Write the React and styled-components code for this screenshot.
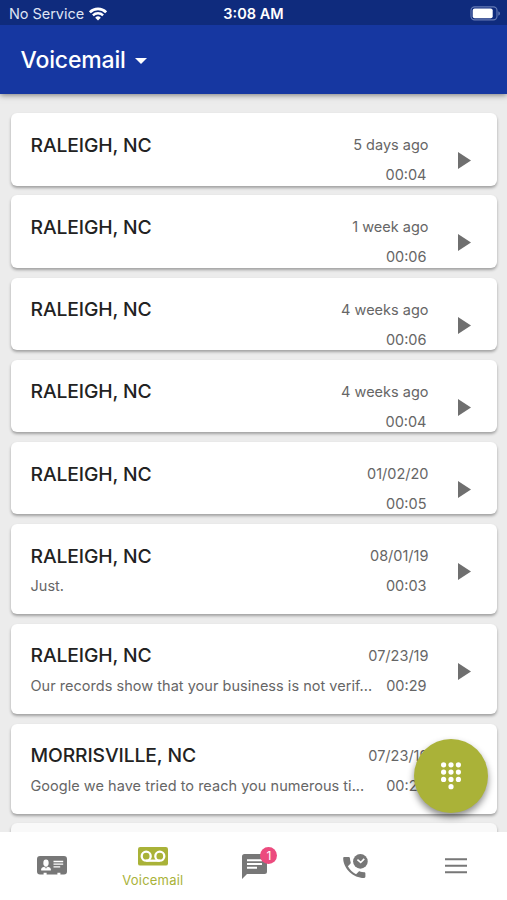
import React from 'react'
import styled, { createGlobalStyle } from 'styled-components'

const voicemails = [
  { from: 'RALEIGH, NC', date: '5 days ago', length: '00:04' },
  { from: 'RALEIGH, NC', date: '1 week ago', length: '00:06' },
  { from: 'RALEIGH, NC', date: '4 weeks ago', length: '00:06' },
  { from: 'RALEIGH, NC', date: '4 weeks ago', length: '00:04' },
  { from: 'RALEIGH, NC', date: '01/02/20', length: '00:05' },
  { from: 'RALEIGH, NC', date: '08/01/19', length: '00:03', preview: 'Just.' },
  { from: 'RALEIGH, NC', date: '07/23/19', length: '00:29', preview: 'Our records show that your business is not verif...' },
  { from: 'MORRISVILLE, NC', date: '07/23/19', length: '00:29', preview: 'Google we have tried to reach you numerous ti...' },
]

export default function App() {
  return (
    <Phone>
      <GlobalStyle />
      <StatusBar>
        <Carrier>
          No Service
          <WifiIcon />
        </Carrier>
        <Clock>3:08 AM</Clock>
        <BatteryIcon />
      </StatusBar>
      <Header>
        <Heading>Voicemail</Heading>
        <Caret viewBox="0 0 12 6"><path d="M0 0h12L6 6z" /></Caret>
      </Header>
      <List>
        {voicemails.map((vm, i) => (
          <Card key={i} $tall={!!vm.preview}>
            <Info>
              <Line>
                <From>{vm.from}</From>
                <Small>{vm.date}</Small>
              </Line>
              <Line>
                <Preview>{vm.preview}</Preview>
                <Duration>{vm.length}</Duration>
              </Line>
            </Info>
            <Play viewBox="0 0 13 17"><path d="M0 0l13 8.5L0 17z" /></Play>
          </Card>
        ))}
        <Card $tall $faded />
      </List>
      <DialButton>
        <DialpadIcon />
      </DialButton>
      <TabBar>
        <Tab><ContactIcon /></Tab>
        <Tab $active>
          <VoicemailIcon />
          <TabLabel>Voicemail</TabLabel>
        </Tab>
        <Tab>
          <MessageIcon />
          <Badge>1</Badge>
        </Tab>
        <Tab><RecentIcon /></Tab>
        <Tab><MenuIcon /></Tab>
      </TabBar>
    </Phone>
  )
}

const WifiIcon = () => (
  <svg width="18" height="14" viewBox="0 0 18 14">
    <path d="M0.9 5.3a11.4 11.4 0 0 1 16.2 0" fill="none" stroke="#fff" strokeWidth="2.6" />
    <path d="M3.9 8.4a7.2 7.2 0 0 1 10.200 0" fill="none" stroke="#fff" strokeWidth="2.4" />
    <path d="M6.2 10.7a4 4 0 0 1 5.6 0L9 13.5z" fill="#fff" />
  </svg>
)

const BatteryIcon = () => (
  <svg width="31" height="15" viewBox="0 0 31 15">
    <rect x="1" y="0.9" width="26" height="13" rx="3.6" fill="none" stroke="#667bb5" strokeWidth="1.1" />
    <rect x="2.7" y="2.6" width="20" height="9.6" rx="2" fill="#fff" />
    <path d="M28.3 5.2c2.2.9 2.2 3.6 0 4.500z" fill="#667bb5" />
  </svg>
)

const DialpadIcon = () => (
  <svg width="22" height="28" viewBox="0 0 22 28">
    {[3.6, 11, 18.4].map(x => [2.8, 10.1, 17.4].map(y => (
      <circle key={x + '-' + y} cx={x} cy={y} r="2.6" fill="#fff" />
    )))}
    <circle cx="11" cy="24.7" r="2.6" fill="#fff" />
  </svg>
)

const ContactIcon = () => (
  <svg width="30" height="20" viewBox="0 0 30 20">
    <path d="M3 0h24a3 3 0 0 1 3 3v12.5a3 3 0 0 1-3 3h-3.6v-1.8h-3v1.8H9.600v-1.800h-3v1.800H3a3 3 0 0 1-3-3V3a3 3 0 0 1 3-3z" fill="#777" />
    <ellipse cx="9" cy="7" rx="2.7" ry="3.4" fill="#fff" />
    <path d="M4.200 14.400v-1.200c0-1.800 2.600-2.600 4.800-2.600s4.800.8 4.800 2.600v1.200z" fill="#fff" />
    <path d="M7.800 10.900L9 12.200l1.200-1.300" fill="none" stroke="#777" strokeWidth="0.8" />
    <path d="M16.500 5.500h9.700M16.500 8.200h9.700M16.500 10.900h6.700" stroke="#fff" strokeWidth="1.3" />
  </svg>
)

const VoicemailIcon = () => (
  <svg width="30" height="19" viewBox="0 0 30 19">
    <rect width="30" height="18.600" rx="2.200" fill="#a9b238" />
    <g fill="none" stroke="#fff" strokeWidth="2.300">
      <circle cx="8.200" cy="9.200" r="4.500" />
      <circle cx="21.800" cy="9.200" r="4.500" />
      <path d="M8.200 13.700h13.600" />
    </g>
  </svg>
)

const MessageIcon = () => (
  <svg width="25" height="25" viewBox="0 0 25 25">
    <path d="M2.500 0h20A2.500 2.500 0 0 1 25 2.500v15a2.500 2.500 0 0 1-2.500 2.500H5l-5 5V2.500A2.500 2.500 0 0 1 2.500 0z" fill="#777" />
    <path d="M5 6.200h15M5 10h15M5 13.800h10" stroke="#fff" strokeWidth="1.900" />
  </svg>
)

const RecentIcon = () => (
  <svg width="25" height="25" viewBox="0 0 26 26">
    <path d="M1.400 3h4.400c.8 0 1.300.5 1.400 1.300.1 1.600.4 3 .8 4.400.2.5 0 1-.3 1.400l-2.600 2.700c2 3.900 5 6.600 8.500 8.300l2.600-2.700c.4-.4.9-.5 1.400-.3 1.400.5 2.800.7 4.400.8.8 0 1.300.6 1.300 1.300v3.300c0 .8-.5 1.400-1.300 1.400C10.500 24.900.2 14.800.2 4.300.2 3.500.7 3 1.400 3z" fill="#777" />
    <circle cx="18.100" cy="7.700" r="7.600" fill="#777" />
    <path d="M15 5.800l3.400 3 3.700-3.700" fill="none" stroke="#fff" strokeWidth="1.700" />
  </svg>
)

const MenuIcon = () => (
  <svg width="22" height="16" viewBox="0 0 22 16">
    <path d="M0 1.200h22M0 7.800h22M0 14.200h22" stroke="#777" strokeWidth="2.100" />
  </svg>
)

const GlobalStyle = createGlobalStyle`
  * {
    box-sizing: border-box;
  }
  body {
    margin: 0;
    font-family: Inter, "Liberation Sans", sans-serif;
  }
  svg {
    display: block;
    flex-shrink: 0;
  }
`;

const Phone = styled.div`
  position: relative;
  display: flex;
  flex-direction: column;
  width: 507px;
  height: 900px;
  overflow: hidden;
  background: #ececec;
`;

const StatusBar = styled.div`
  display: grid;
  grid-template-columns: 1fr auto 1fr;
  align-items: center;
  height: 25px;
  padding: 2px 6px 0 9px;
  flex-shrink: 0;
  background: #0f2b7d;
  color: #fff;
  font-size: 14.5px;
  z-index: 2;

  > svg {
    justify-self: end;
  }
`;

const Carrier = styled.div`
  display: flex;
  align-items: center;
  gap: 5px;
  color: #dfe4f3;
  letter-spacing: -0.05px;
  white-space: nowrap;
`;

const Clock = styled.div`
  padding-right: 3px;
  font-weight: 600;
  white-space: nowrap;
`;

const Header = styled.header`
  display: flex;
  align-items: center;
  gap: 9px;
  height: 69px;
  padding: 0 20.5px;
  flex-shrink: 0;
  background: #1637a1;
  box-shadow: 0 1px 6px rgba(0, 0, 0, 0.5);
  z-index: 1;
`;

const Heading = styled.h1`
  margin: 0;
  color: #fff;
  font-size: 23px;
  font-weight: 500;
  letter-spacing: -0.15px;
`;

const Caret = styled.svg`
  width: 12px;
  height: 6px;
  margin-top: 3px;
  fill: #fff;
`;

const List = styled.main`
  display: flex;
  flex-direction: column;
  gap: 9.7px;
  flex: 1;
  min-height: 0;
  padding: 19.2px 10px 0 10.5px;
  overflow: hidden;
`;

const Card = styled.article`
  display: flex;
  align-items: flex-start;
  height: ${({ $tall }) => ($tall ? '90px' : '72.5px')};
  padding: 16.6px 26px 0 20px;
  flex-shrink: 0;
  border-radius: 6px;
  background: ${({ $faded }) => ($faded ? '#f9f9f9' : '#fff')};
  box-shadow: 0 2px 3px rgba(0, 0, 0, 0.32);
`;

const Info = styled.div`
  width: 398px;
`;

const Line = styled.div`
  display: flex;
  justify-content: space-between;
  align-items: center;
  height: 30px;
  white-space: nowrap;
`;

const From = styled.h2`
  margin: 0;
  color: #222;
  font-size: 19.3px;
  font-weight: 500;
  letter-spacing: -0.1px;
`;

const Small = styled.span`
  color: #666;
  font-size: 14.5px;
`;

const Preview = styled(Small)`
  letter-spacing: 0.03px;
`;

const Duration = styled(Small)`
  padding-right: 2px;
`;

const Play = styled.svg`
  width: 13px;
  height: 17px;
  margin: 22.4px 0 0 29.5px;
  fill: #6f6f6f;
`;

const DialButton = styled.button`
  position: absolute;
  left: 414px;
  top: 738.5px;
  display: flex;
  align-items: center;
  justify-content: center;
  width: 74px;
  height: 74px;
  padding: 0;
  border: none;
  border-radius: 50%;
  background: #aab238;
  box-shadow: 0 4px 7px rgba(0, 0, 0, 0.45);
`;

const TabBar = styled.nav`
  display: flex;
  height: 68px;
  padding-left: 1px;
  flex-shrink: 0;
  background: #fff;
`;

const Tab = styled.div`
  position: relative;
  display: flex;
  flex: 1;
  flex-direction: column;
  align-items: center;
  justify-content: center;
  gap: 6px;
  padding-top: ${({ $active }) => ($active ? '2px' : '0')};
  color: ${({ $active }) => ($active ? '#a9b238' : '#777')};
`;

const TabLabel = styled.span`
  font-size: 13px;
  line-height: 16px;
  letter-spacing: 0.2px;
`;

const Badge = styled.span`
  position: absolute;
  left: 57px;
  top: 15px;
  width: 17px;
  height: 17px;
  border-radius: 50%;
  background: #ec4b7e;
  color: #fff;
  font-size: 12px;
  line-height: 17px;
  text-align: center;
`;
